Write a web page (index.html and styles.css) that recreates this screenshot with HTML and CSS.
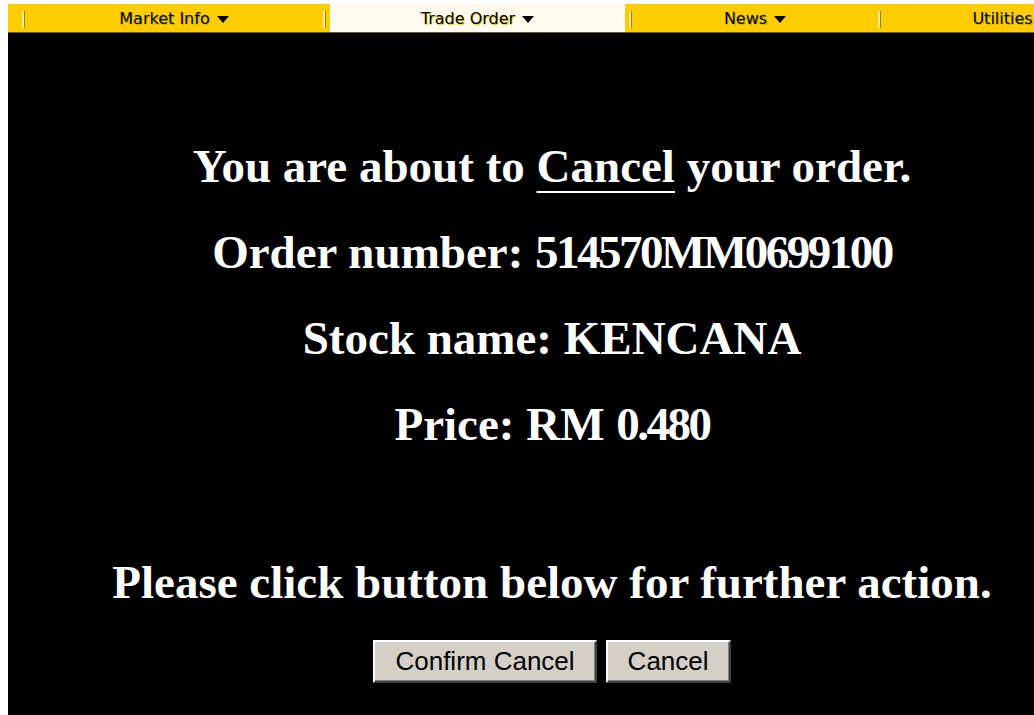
FILE: index.html
```html
<!DOCTYPE html>
<html lang="en">
<head>
<meta charset="utf-8">
<title>Cancel Order</title>
<link rel="stylesheet" href="styles.css">
</head>
<body>
<div class="page">
  <nav class="menubar">
    <span class="lead"></span>
    <span class="sep"></span>
    <a class="menu market">Market Info <span class="caret"></span></a>
    <span class="sep"></span>
    <a class="menu trade active">Trade Order <span class="caret"></span></a>
    <span class="sep"></span>
    <a class="menu news">News <span class="caret"></span></a>
    <span class="sep"></span>
    <a class="menu utilities">Utilities <span class="caret"></span></a>
  </nav>

  <main class="confirm">
    <p class="line">You are about to <span class="action">Cancel</span> your order.</p>
    <p class="line">Order number: <span class="figure">514570MM0699100</span></p>
    <p class="line">Stock name: KENCANA</p>
    <p class="line">Price: RM <span class="figure">0.480</span></p>
    <p class="line prompt">Please click button below for further action.</p>
    <div class="buttons">
      <button class="btn" type="button">Confirm Cancel</button>
      <button class="btn" type="button">Cancel</button>
    </div>
  </main>
</div>
</body>
</html>
```

FILE: styles.css
```css
html {
  background: #ffffff;
  overflow: hidden;
}

body {
  margin: 4px 0 0 8px;
  background: #000000;
}

.page {
  width: 1088px;
  min-height: 711px;
  background: #000000;
}

/* top menu strip */
.menubar {
  display: flex;
  align-items: center;
  height: 28px;
  background: #ffcc00;
  border-bottom: 1px solid #6b6420;
  font-family: "DejaVu Sans", Verdana, sans-serif;
  font-size: 16px;
  color: #000000;
}

.lead {
  width: 14px;
  flex: none;
}

.sep {
  width: 2px;
  height: 17px;
  margin-top: 2px;
  background: #f2ec8a;
  border-right: 1px solid #8e8a1e;
  flex: none;
}

.menu {
  display: flex;
  align-items: center;
  justify-content: center;
  gap: 7px;
  height: 100%;
  flex: none;
  text-shadow: 1px 1px 0 #c9b000;
  cursor: default;
}

.market { width: 298px; }
.trade { width: 295px; margin: 0 4px; }
.news { width: 246px; }
.utilities { width: 262px; }

.menu.active {
  background: #fffaee;
  text-shadow: 1px 1px 0 #e8d200;
}

.caret {
  width: 0;
  height: 0;
  border-left: 6px solid transparent;
  border-right: 6px solid transparent;
  border-top: 7px solid #000000;
  margin-top: 2px;
}

/* order confirmation */
.confirm {
  display: flex;
  flex-direction: column;
  align-items: center;
  padding-top: 90px;
  font-family: "Liberation Serif", "Times New Roman", serif;
  font-weight: bold;
  color: #ffffff;
}

.line {
  margin: 0;
  font-size: 47px;
  line-height: 86px;
  white-space: nowrap;
}

.figure {
  letter-spacing: -2.5px;
}

.action {
  text-decoration: underline;
  text-decoration-thickness: 2px;
  text-underline-offset: 9px;
}

.prompt {
  margin-top: 72px;
}

.buttons {
  display: flex;
  gap: 9px;
  margin-top: 15px;
}

.btn {
  height: 43px;
  padding: 0 20px;
  font-family: "Liberation Sans", Arial, sans-serif;
  font-size: 26px;
  color: #000000;
  background: #d4d0c8;
  border: 2px solid;
  border-color: #ffffff #404040 #404040 #ffffff;
  box-shadow: inset -1px -1px 0 #808080;
  border-radius: 0;
}
```
